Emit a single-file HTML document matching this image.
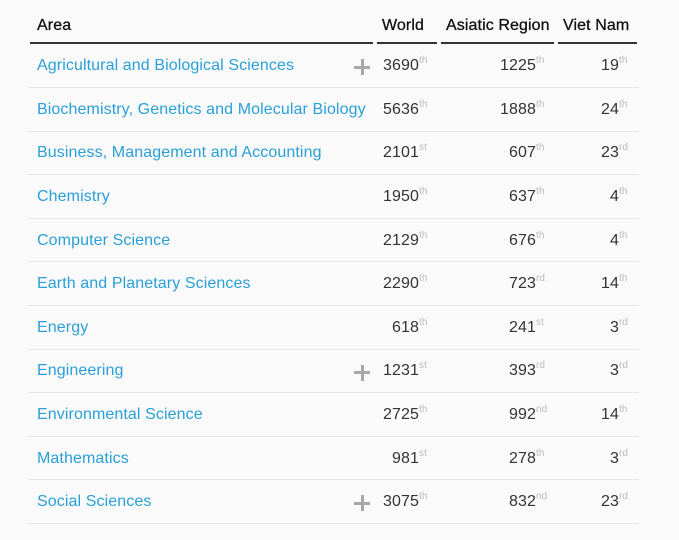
<!DOCTYPE html>
<html><head><meta charset="utf-8"><style>
body{margin:0;background:#fafafa;font-family:"Liberation Sans",sans-serif;width:679px;height:540px;overflow:hidden}
table{position:absolute;left:28px;top:0;border-collapse:collapse;font-size:16px;color:#333;letter-spacing:0.1px;table-layout:fixed;width:611px}
th{padding:0 2px;height:44px;vertical-align:bottom;font-weight:normal;color:#111;font-size:16px;-webkit-text-stroke:0.3px #111}
th div{border-bottom:2px solid #333;height:42px;line-height:48px;box-sizing:border-box;padding-left:7px;text-align:left;white-space:nowrap}
td{height:43.6px;border-bottom:1px solid #e6e6e6;padding:0;vertical-align:middle;padding-top:1px;box-sizing:border-box}
td.a{padding-left:9px;color:#2a9fd8;position:relative;white-space:nowrap}
td.n{text-align:right;padding-right:10px}
sup{color:#bbb;font-size:10px;vertical-align:7px;line-height:0;display:inline-block;width:10px;text-align:left}
.p{position:absolute;right:5px;top:15px;width:16px;height:16px}
.p:before{content:"";position:absolute;left:0;top:6.5px;width:16px;height:3px;background:#a8a8a8}
.p:after{content:"";position:absolute;left:6.5px;top:0;width:3px;height:16px;background:#a8a8a8}
</style></head><body>
<table>
<colgroup><col style="width:347px"><col style="width:64px"><col style="width:117px"><col style="width:83px"></colgroup>
<tr><th><div>Area</div></th><th><div style="padding-left:5px">World</div></th><th><div style="padding-left:5px">Asiatic Region</div></th><th><div style="padding-left:5px">Viet Nam</div></th></tr>
<tr><td class="a">Agricultural and Biological Sciences<span class="p"></span></td><td class="n">3690<sup>th</sup></td><td class="n">1225<sup>th</sup></td><td class="n">19<sup>th</sup></td></tr>
<tr><td class="a">Biochemistry, Genetics and Molecular Biology</td><td class="n">5636<sup>th</sup></td><td class="n">1888<sup>th</sup></td><td class="n">24<sup>th</sup></td></tr>
<tr><td class="a">Business, Management and Accounting</td><td class="n">2101<sup>st</sup></td><td class="n">607<sup>th</sup></td><td class="n">23<sup>rd</sup></td></tr>
<tr><td class="a">Chemistry</td><td class="n">1950<sup>th</sup></td><td class="n">637<sup>th</sup></td><td class="n">4<sup>th</sup></td></tr>
<tr><td class="a">Computer Science</td><td class="n">2129<sup>th</sup></td><td class="n">676<sup>th</sup></td><td class="n">4<sup>th</sup></td></tr>
<tr><td class="a">Earth and Planetary Sciences</td><td class="n">2290<sup>th</sup></td><td class="n">723<sup>rd</sup></td><td class="n">14<sup>th</sup></td></tr>
<tr><td class="a">Energy</td><td class="n">618<sup>th</sup></td><td class="n">241<sup>st</sup></td><td class="n">3<sup>rd</sup></td></tr>
<tr><td class="a">Engineering<span class="p"></span></td><td class="n">1231<sup>st</sup></td><td class="n">393<sup>rd</sup></td><td class="n">3<sup>rd</sup></td></tr>
<tr><td class="a">Environmental Science</td><td class="n">2725<sup>th</sup></td><td class="n">992<sup>nd</sup></td><td class="n">14<sup>th</sup></td></tr>
<tr><td class="a">Mathematics</td><td class="n">981<sup>st</sup></td><td class="n">278<sup>th</sup></td><td class="n">3<sup>rd</sup></td></tr>
<tr><td class="a">Social Sciences<span class="p"></span></td><td class="n">3075<sup>th</sup></td><td class="n">832<sup>nd</sup></td><td class="n">23<sup>rd</sup></td></tr>
</table>
</body></html>
